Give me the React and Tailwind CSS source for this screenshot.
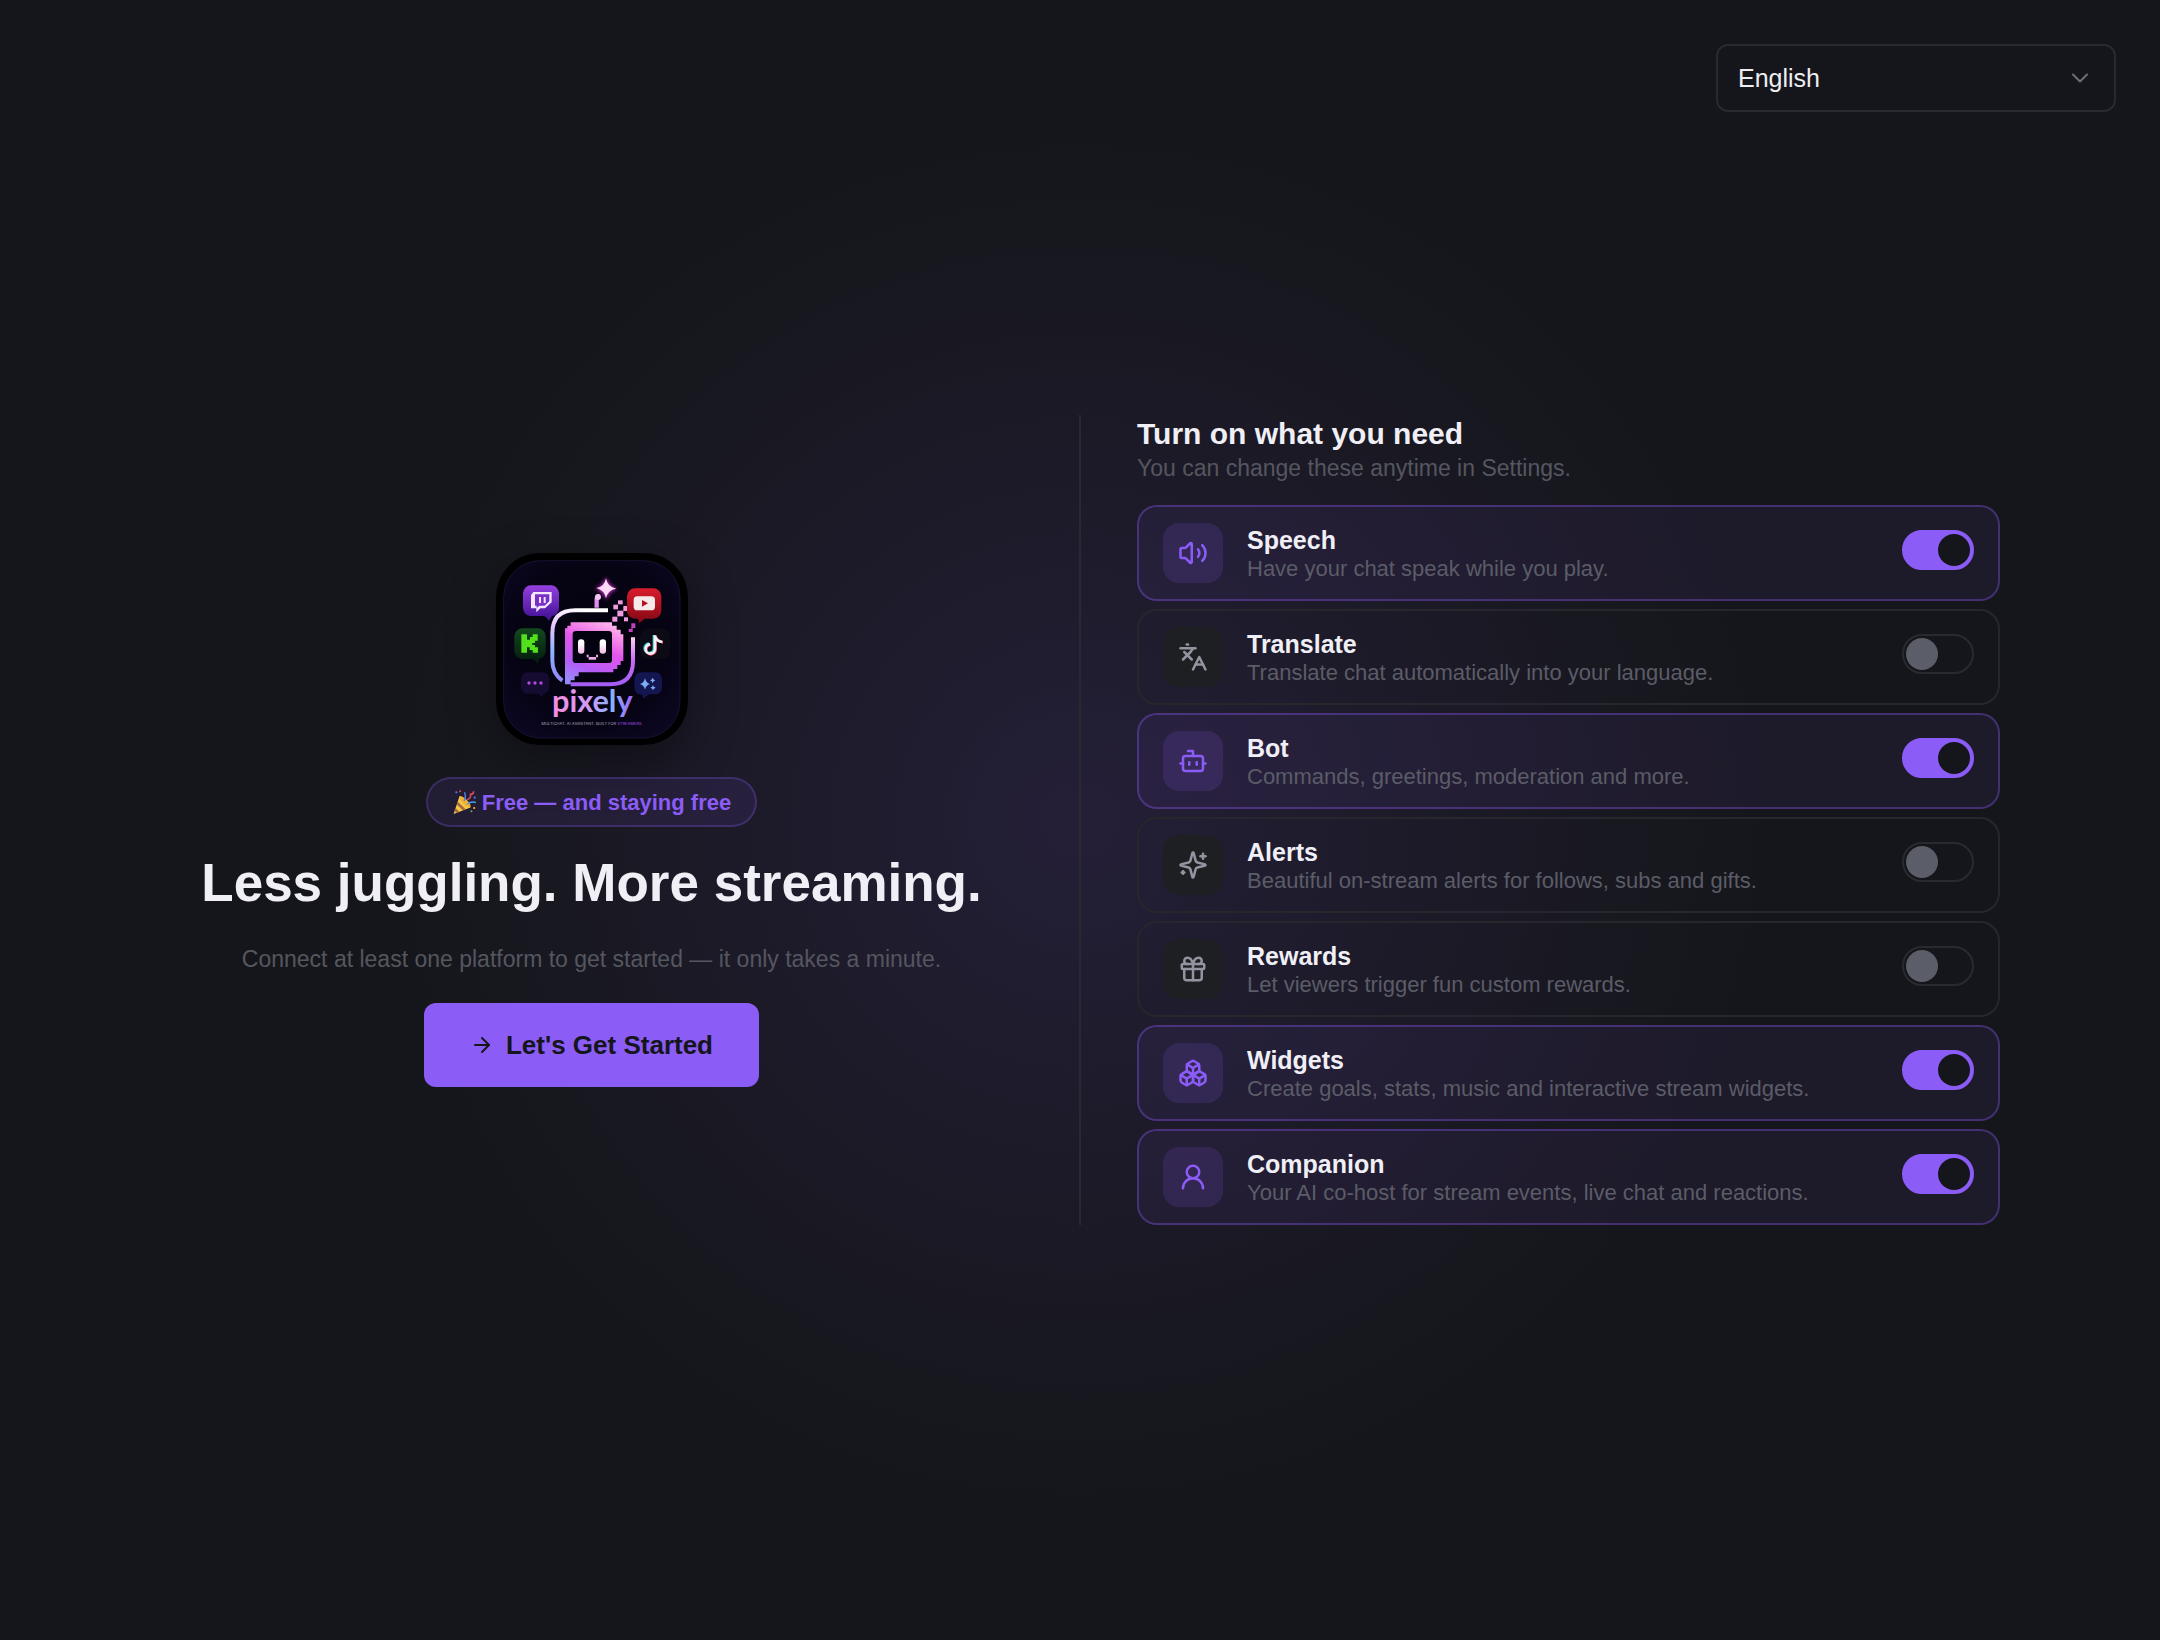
import React, { useState } from 'react';
import {
  ArrowRight,
  Bot,
  Boxes,
  ChevronDown,
  Languages,
  UserRound,
  Volume2,
} from 'lucide-react';

const iconProps = {
  viewBox: '0 0 24 24',
  fill: 'none',
  stroke: 'currentColor',
  strokeLinecap: 'round',
  strokeLinejoin: 'round',
  'aria-hidden': true,
};

const SparklesIcon = (props) => (
  <svg {...iconProps} {...props}>
    <path d="M9.937 15.5A2 2 0 0 0 8.5 14.063l-6.135-1.582a.5.5 0 0 1 0-.962L8.5 9.936A2 2 0 0 0 9.937 8.5l1.582-6.135a.5.5 0 0 1 .963 0L14.063 8.5A2 2 0 0 0 15.5 9.937l6.135 1.581a.5.5 0 0 1 0 .964L15.5 14.063a2 2 0 0 0-1.437 1.437l-1.582 6.135a.5.5 0 0 1-.963 0z" />
    <path d="M20 3v4" />
    <path d="M22 5h-4" />
    <path d="M4 17v2" />
    <path d="M5 18H3" />
  </svg>
);

const GiftIcon = (props) => (
  <svg {...iconProps} {...props}>
    <rect x="3" y="8" width="18" height="4" rx="1" />
    <path d="M12 8v13" />
    <path d="M19 12v7a2 2 0 0 1-2 2H7a2 2 0 0 1-2-2v-7" />
    <path d="M7.5 8a2.5 2.5 0 0 1 0-5A4.8 8 0 0 1 12 8a4.8 8 0 0 1 4.5-5 2.5 2.5 0 0 1 0 5" />
  </svg>
);

const FEATURES = [
  { id: 'speech', icon: Volume2, title: 'Speech', text: 'Have your chat speak while you play.', on: true },
  { id: 'translate', icon: Languages, title: 'Translate', text: 'Translate chat automatically into your language.', on: false },
  { id: 'bot', icon: Bot, title: 'Bot', text: 'Commands, greetings, moderation and more.', on: true },
  { id: 'alerts', icon: SparklesIcon, title: 'Alerts', text: 'Beautiful on-stream alerts for follows, subs and gifts.', on: false },
  { id: 'rewards', icon: GiftIcon, title: 'Rewards', text: 'Let viewers trigger fun custom rewards.', on: false },
  { id: 'widgets', icon: Boxes, title: 'Widgets', text: 'Create goals, stats, music and interactive stream widgets.', on: true },
  { id: 'companion', icon: UserRound, title: 'Companion', text: 'Your AI co-host for stream events, live chat and reactions.', on: true },
];

const Logo = () => (
  <svg
    viewBox="48 38 576 576"
    role="img"
    aria-label="pixely"
    className="size-48 rounded-[44px] shadow-[0_16px_48px_rgba(0,0,0,0.35)]"
  >
    <defs>
      <radialGradient id="tile" cx="0.5" cy="0.45" r="0.7">
        <stop offset="0" stopColor="#05020f" />
        <stop offset="0.6" stopColor="#060313" />
        <stop offset="1" stopColor="#0c0824" />
      </radialGradient>
      <linearGradient id="ring" x1="0.6" y1="0" x2="0.3" y2="1">
        <stop offset="0" stopColor="#fff" />
        <stop offset="0.35" stopColor="#e9c8fb" />
        <stop offset="0.7" stopColor="#8fb4ff" />
        <stop offset="1" stopColor="#8f8bf8" />
      </linearGradient>
      <linearGradient id="ringRight" x1="0" y1="0" x2="0" y2="1">
        <stop offset="0" stopColor="#ffd0f5" />
        <stop offset="0.5" stopColor="#c86bf2" />
        <stop offset="1" stopColor="#a45cf5" />
      </linearGradient>
      <linearGradient id="face" x1="0.7" y1="0" x2="0.3" y2="1">
        <stop offset="0" stopColor="#ffb3ea" />
        <stop offset="0.4" stopColor="#e455ea" />
        <stop offset="0.75" stopColor="#b45cf5" />
        <stop offset="1" stopColor="#9a86fb" />
      </linearGradient>
      <linearGradient id="eye" x1="0" y1="0" x2="0" y2="1">
        <stop offset="0.3" stopColor="#fff" />
        <stop offset="1" stopColor="#f4b7e8" />
      </linearGradient>
      <linearGradient id="word" x1="0" y1="0" x2="1" y2="0">
        <stop offset="0" stopColor="#f98be0" />
        <stop offset="0.45" stopColor="#cf9bf7" />
        <stop offset="0.75" stopColor="#86b2ff" />
        <stop offset="1" stopColor="#a263f5" />
      </linearGradient>
      <linearGradient id="twitch" x1="0" y1="0" x2="0" y2="1">
        <stop offset="0" stopColor="#9440e0" />
        <stop offset="1" stopColor="#4a169c" />
      </linearGradient>
      <linearGradient id="youtube" x1="0" y1="0" x2="0" y2="1">
        <stop offset="0" stopColor="#d81c2c" />
        <stop offset="1" stopColor="#8d0b18" />
      </linearGradient>
      <linearGradient id="kick" x1="0" y1="0" x2="0" y2="1">
        <stop offset="0" stopColor="#124a1c" />
        <stop offset="1" stopColor="#062010" />
      </linearGradient>
      <filter id="glow" x="-50%" y="-50%" width="200%" height="200%">
        <feGaussianBlur stdDeviation="6" />
      </filter>
    </defs>

    <rect x="48" y="38" width="576" height="576" fill="#000" />
    <rect x="71" y="61" width="529" height="532" rx="110" fill="url(#tile)" stroke="#221b45" strokeWidth="2" />

    {/* Antenna and star */}
    <path d="M350 202v-26q0-6 10-9" fill="none" stroke="#dd8ff0" strokeWidth="13" />
    <circle cx="354" cy="170" r="9" fill="#f3c6f7" />
    <path d="M378 110q5 32 35 35q-30 4-35 33q-5-29-33-33q28-4 33-35Z" fill="#e63be0" filter="url(#glow)" />
    <path d="M378 114q5 27 31 31q-26 4-31 29q-5-25-29-31q24-2 29-29Z" fill="#ffd9f8" />

    {/* Head outline */}
    <path
      d="M384 210H286q-69 0-69 69v82q0 38 30 60"
      fill="none"
      stroke="url(#ring)"
      strokeWidth="12"
    />
    <path
      d="M459 291v72q0 69-69 69H272"
      fill="none"
      stroke="url(#ringRight)"
      strokeWidth="12"
    />

    {/* Pixel face */}
    <path
      fill="url(#face)"
      fillRule="evenodd"
      d="M272 246h124v10h14v12h12v14h8v80h-8v12h-10v12h-12v10H296v12h-12v12h-12v12h-17V264h7v-8h10ZM288 272q-10 0-10 10v76q0 10 10 10h98q10 0 10-10v-76q0-10-10-10Z"
    />
    <rect x="294" y="297" width="19" height="43" rx="9" fill="url(#eye)" />
    <rect x="359" y="297" width="19" height="43" rx="9" fill="url(#eye)" />
    <path d="M320 343h6v7h22v-7h6v8h-6v7h-22v-7h-6Z" fill="#f0a8ea" />

    {/* Loose pixels */}
    <g fill="#f09be0">
      <rect x="414" y="180" width="14" height="12" />
      <rect x="400" y="193" width="14" height="14" />
      <rect x="430" y="197" width="15" height="15" />
      <rect x="412" y="211" width="18" height="17" />
      <rect x="397" y="229" width="15" height="15" />
      <rect x="432" y="231" width="12" height="12" />
      <path d="M454 249h12v14h-8v12h-12v-9h8Z" fill="#c13fc0" />
    </g>

    {/* Twitch */}
    <rect x="129" y="135" width="108" height="92" rx="24" fill="url(#twitch)" />
    <path d="M180 222h40l-14 20q-4-14-20-16Z" fill="#4a169c" />
    <path d="M160 155h55v31l-20 18h-14l-12 12v-12h-16v-40Z" fill="#f3e6ff" />
    <path d="M165 162h43v21l-14 13h-16l-8 7v-7h-5Z" fill="#7a2fc9" />
    <path d="M177 170h6v18h-6ZM191 170h6v18h-6Z" fill="#f3e6ff" />

    {/* YouTube */}
    <rect x="441" y="144" width="103" height="91" rx="24" fill="url(#youtube)" />
    <path d="M465 231h35l-23 18q1-14-12-18Z" fill="#8d0b18" />
    <rect x="461" y="168" width="64" height="42" rx="11" fill="#f6e9ea" />
    <path d="m486 179 18 10-18 10Z" fill="#b4121f" />

    {/* Kick */}
    <rect x="103" y="264" width="94" height="92" rx="24" fill="url(#kick)" />
    <path d="M145 352h34l-6 18q-8-15-28-18Z" fill="#062010" />
    <path d="M124 282h17v16h9v-8h8v-8h15v19h-8v7h-8v6h8v7h9v16h-16v-8h-9v-8h-8v16h-17Z" fill="#53e01c" />

    {/* TikTok */}
    <rect x="480" y="264" width="90" height="92" rx="24" fill="#0c0a14" />
    <g fill="none" strokeWidth="8">
      <path d="M522 284v40a14 14 0 1 1-15-14M522 287q5 15 22 17" stroke="#3ad5d8" />
      <path d="M527 286v42a14 14 0 1 1-15-14M527 289q5 15 22 17" stroke="#e8405f" />
      <path d="M525 285v41a14 14 0 1 1-15-14M525 288q5 15 22 17" stroke="#f4f2f4" />
    </g>

    {/* Chat dots */}
    <rect x="123" y="396" width="85" height="64" rx="20" fill="#160b30" />
    <path d="M160 456h32l-6 16q-8-12-26-16Z" fill="#160b30" />
    <g fill="#b34ae0">
      <circle cx="147" cy="428" r="5" />
      <circle cx="165" cy="428" r="5" />
      <circle cx="183" cy="428" r="5" />
    </g>

    {/* AI sparkle */}
    <rect x="463" y="396" width="83" height="66" rx="20" fill="#141650" />
    <path d="M478 458h34l-23 18q1-14-11-18Z" fill="#141650" />
    <path d="M495 413q3 15 15 18q-12 3-15 17q-3-14-15-17q12-3 15-18ZM518 412q2 7 8 8q-6 2-8 9q-2-7-8-9q6-1 8-8ZM519 434q1 6 8 8q-7 2-8 8q-1-6-8-8q7-2 8-8Z" fill="#7dabf5" />

    {/* Word mark */}
    <text
      x="337"
      y="516"
      textAnchor="middle"
      fontFamily='"Lato", sans-serif'
      fontWeight="700"
      fontSize="92"
      fill="url(#word)"
    >
      pixely
    </text>
    <text
      x="336"
      y="553"
      textAnchor="middle"
      fontFamily='"Inter", sans-serif'
      fontSize="12"
      fill="#a9a3b5"
    >
      MULTICHAT. AI ASSISTANT. BUILT FOR <tspan fill="#a04fe0">STREAMERS.</tspan>
    </text>
  </svg>
);

const PartyPopper = () => (
  <svg viewBox="0 0 24 24" aria-hidden="true" className="size-[26px]">
    <path d="M7 6.5 17 17 1.5 23Z" fill="#f7c948" />
    <path d="M5.2 11.5 12.6 18.7 10 19.7 4.3 14.2ZM3.2 17.4 6.6 21 4.2 22 2.2 20Z" fill="#a8683f" />
    <ellipse cx="12" cy="11.8" rx="2.4" ry="7" transform="rotate(-45 12 11.8)" fill="#f2b233" />
    <path d="M11 11q2.500-4 .5-8" fill="none" stroke="#4a7fef" strokeWidth="1.4" />
    <path d="M14 14q4-3 8-1.500" fill="none" stroke="#4a9fef" strokeWidth="1.400" />
    <path d="M14 10q4-2 3-5 3 0 3-3" fill="none" stroke="#d9485f" strokeWidth="1.5" />
    <circle cx="4" cy="3" r="1" fill="#4a7fef" />
    <circle cx="7.500" cy="2" r="0.900" fill="#e5484d" />
    <circle cx="21" cy="8" r="1" fill="#4a7fef" />
    <circle cx="20.500" cy="17.500" r="1" fill="#f5b83d" />
    <circle cx="18" cy="20.500" r="0.900" fill="#57b560" />
  </svg>
);

const LanguageSelect = () => (
  <div className="relative w-[400px]">
    <select
      aria-label="Language"
      className="h-[68px] w-full appearance-none rounded-xl border-2 border-[#292a30] bg-[#15161b] px-5 pt-[2px] text-[25px] text-[#eeeef2]"
    >
      <option>English</option>
    </select>
    <ChevronDown
      className="pointer-events-none absolute right-[22px] top-5 size-7 text-[#6b6d75]"
      strokeWidth={1.8}
    />
  </div>
);

const FeatureCard = ({ feature, checked, onToggle }) => {
  const Icon = feature.icon;

  return (
    <label
      htmlFor={feature.id}
      className={`flex h-24 items-center gap-6 rounded-[20px] border-2 px-6 ${
        checked ? 'border-[#8b5cf6]/35 bg-[#8b5cf6]/7' : 'border-[#26272d]'
      }`}
    >
      <span
        className={`flex size-[60px] items-center justify-center rounded-2xl ${
          checked ? 'bg-[#8b5cf6]/15 text-[#8b5cf6]' : 'bg-[#1e1f23] text-[#9294a0]'
        }`}
      >
        <Icon className="size-[30px]" strokeWidth={2} />
      </span>
      <span className="flex flex-1 flex-col pt-[2px]">
        <span className="text-[25px] font-bold leading-[30px] text-[#f0eff6]">
          {feature.title}
        </span>
        <span className="text-[22px] leading-7 text-[#5b5c67]">{feature.text}</span>
      </span>
      <span className="flex pb-[6px]">
        <input
          id={feature.id}
          type="checkbox"
          role="switch"
          checked={checked}
          onChange={onToggle}
          className="h-10 w-[72px] appearance-none rounded-full border-2 border-[#292a30] p-[2px] before:block before:size-8 before:rounded-full before:bg-[#5b5e69] checked:border-[#8b5cf6] checked:bg-[#8b5cf6] checked:before:translate-x-8 checked:before:bg-[#15161b]"
        />
      </span>
    </label>
  );
};

const App = () => {
  const [enabled, setEnabled] = useState(() =>
    Object.fromEntries(FEATURES.map((f) => [f.id, f.on]))
  );

  const toggle = (id) => setEnabled((prev) => ({ ...prev, [id]: !prev[id] }));

  return (
    <div className="flex min-h-screen flex-col bg-[#15161b] bg-[radial-gradient(circle_700px_at_center,rgba(139,92,246,0.13),rgba(139,92,246,0.04)_65%,transparent)] font-['Liberation_Sans',Arial,sans-serif]">
      <header className="flex justify-end px-11 pt-11">
        <LanguageSelect />
      </header>

      <main className="flex flex-1 items-center justify-center px-11 pb-28">
        <div className="grid w-full max-w-[1840px] grid-cols-[1fr_2px_1fr] gap-14">
          {/* Intro */}
          <section className="flex flex-col items-center justify-center text-center">
            <Logo />
            <p className="mt-8 flex h-[50px] items-center gap-1 rounded-full border-2 border-[#8b5cf6]/25 bg-[#8b5cf6]/10 px-6 text-[22px] font-bold text-[#8b5cf6]">
              <PartyPopper />
              Free — and staying free
            </p>
            <h1 className="mt-[26px] text-[53px] font-bold leading-[60px] text-[#f0eff6]">
              Less juggling. More streaming.
            </h1>
            <p className="mt-8 text-[23px] leading-7 text-[#55565f]">
              Connect at least one platform to get started — it only takes a minute.
            </p>
            <button
              type="button"
              className="mt-[30px] flex h-[84px] items-center gap-3 rounded-xl bg-[#8b5cf6] px-[46px] text-[26px] font-bold text-[#15161b]"
            >
              <ArrowRight className="size-6" strokeWidth={2} />
              Let's Get Started
            </button>
          </section>

          <div className="bg-[#292934]" />

          {/* Features */}
          <section>
            <h2 className="text-[30px] font-bold leading-[38px] text-[#f0eff6]">
              Turn on what you need
            </h2>
            <p className="text-[23px] leading-[30px] text-[#55565f]">
              You can change these anytime in Settings.
            </p>
            <div className="mt-[22px] flex flex-col gap-2">
              {FEATURES.map((feature) => (
                <FeatureCard
                  key={feature.id}
                  feature={feature}
                  checked={enabled[feature.id]}
                  onToggle={() => toggle(feature.id)}
                />
              ))}
            </div>
          </section>
        </div>
      </main>
    </div>
  );
};

export default App;
